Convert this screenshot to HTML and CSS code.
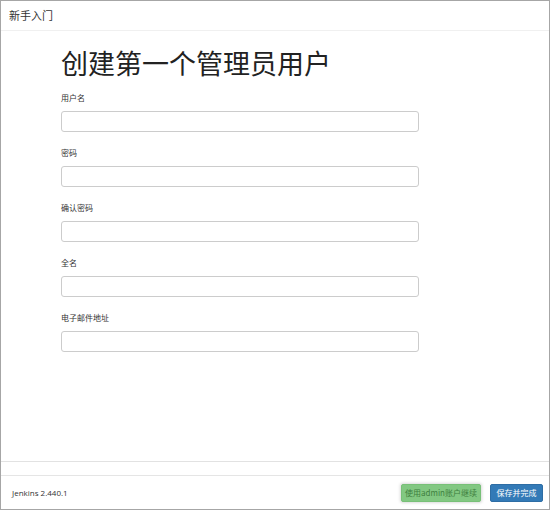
FILE: index.html
```html
<!DOCTYPE html>
<html lang="zh">
<head>
<meta charset="utf-8">
<link rel="stylesheet" href="styles.css">
</head>
<body>
<div class="dialog">
  <div class="header">新手入门</div>
  <div class="content">
    <h1 class="title">创建第一个管理员用户</h1>
    <div class="group">
      <label class="label">用户名</label>
      <input class="input" type="text">
    </div>
    <div class="group">
      <label class="label">密码</label>
      <input class="input" type="password">
    </div>
    <div class="group">
      <label class="label">确认密码</label>
      <input class="input" type="password">
    </div>
    <div class="group">
      <label class="label">全名</label>
      <input class="input" type="text">
    </div>
    <div class="group">
      <label class="label">电子邮件地址</label>
      <input class="input" type="text">
    </div>
  </div>
  <div class="gap"></div>
  <div class="footer">
    <span class="version">Jenkins 2.440.1</span>
    <div class="actions">
      <button class="btn btn-green">使用admin账户继续</button>
      <button class="btn btn-blue">保存并完成</button>
    </div>
  </div>
</div>
</body>
</html>
```
FILE: styles.css
```css
* { box-sizing: border-box; }
html, body {
  margin: 0;
  padding: 0;
  background: #fff;
}
body {
  font-family: "Noto Sans CJK SC", "Noto Sans", sans-serif;
  color: #333;
}
.dialog {
  width: 550px;
  height: 510px;
  border: 1px solid #a6a6a6;
  display: flex;
  flex-direction: column;
  background: #fff;
}
.header {
  height: 30px;
  flex: none;
  border-bottom: 1px solid #f0f0f0;
  padding-left: 8px;
  font-size: 11px;
  line-height: 29px;
  color: #333;
}
.content {
  flex: 1;
  padding: 15px 0 0 60px;
  border-bottom: 1px solid #e2e2e2;
}
.title {
  margin: 0 0 12px 0;
  font-size: 27px;
  font-weight: normal;
  line-height: 34px;
  color: #222;
}
.group {
  display: flex;
  flex-direction: column;
  margin-bottom: 15px;
}
.label {
  font-size: 8px;
  line-height: 12px;
  margin-bottom: 7px;
  color: #333;
}
.input {
  width: 358px;
  height: 21px;
  border: 1px solid #ccc;
  border-radius: 3px;
  margin: 0;
  padding: 0 6px;
  background: #fff;
}
.gap {
  height: 14px;
  flex: none;
  border-bottom: 1px solid #e5e5e5;
}
.footer {
  height: 33px;
  flex: none;
  display: flex;
  align-items: center;
  justify-content: space-between;
  padding: 0 6px 0 11px;
}
.version {
  font-family: "Open Sans", "Noto Sans", sans-serif;
  font-size: 8px;
  color: #333;
}
.actions {
  display: flex;
  gap: 9px;
  align-items: center;
}
.btn {
  font-family: "Noto Sans CJK SC", sans-serif;
  font-size: 8px;
  height: 18px;
  border-radius: 2px;
  border: 1px solid transparent;
  padding: 0;
  line-height: 16px;
  white-space: nowrap;
  text-align: center;
}
.btn-green {
  width: 80px;
  background: #82c882;
  border-color: #78c078;
  color: #3e7f3e;
  box-shadow: 0 0 3px 1px rgba(0,0,0,0.15);
}
.btn-blue {
  width: 53px;
  background: #337ab7;
  border-color: #2e6da4;
  color: #fff;
}
```
